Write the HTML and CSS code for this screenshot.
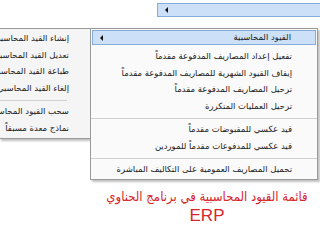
FILE: index.html
```html
<!DOCTYPE html>
<html lang="ar">
<head>
  <meta charset="UTF-8" />
  <meta name="viewport" content="width=device-width, initial-scale=1.0"/>
  <title>قائمة القيود المحاسبية</title>
  <link rel="stylesheet" href="styles.css">
</head>
<body>

  <div class="topbar">
    <span class="arrow"></span>
  </div>

  <div class="menus">
    <ul class="menu menu--back" dir="rtl">
      <li>إنشاء القيد المحاسبي</li>
      <li>تعديل القيد المحاسبي</li>
      <li>طباعة القيد المحاسبي</li>
      <li>إلغاء القيد المحاسبي</li>
      <li class="sep"></li>
      <li>سحب القيود المحاسبية</li>
      <li>نماذج معدة مسبقاً</li>
    </ul>

    <ul class="menu menu--main" dir="rtl">
      <li class="menu__head">القيود المحاسبية<span class="arrow"></span></li>
      <li>تفعيل إعداد المصاريف المدفوعة مقدماً</li>
      <li>إيقاف القيود الشهرية للمصاريف المدفوعة مقدماً</li>
      <li>ترحيل المصاريف المدفوعة مقدماً</li>
      <li>ترحيل العمليات المتكررة</li>
      <li class="sep"></li>
      <li>قيد عكسي للمقبوضات مقدماً</li>
      <li>قيد عكسي للمدفوعات مقدماً للموردين</li>
      <li class="sep"></li>
      <li>تحميل المصاريف العمومية على التكاليف المباشرة</li>
    </ul>
  </div>

  <div class="caption">
    <p class="caption__ar" dir="rtl">قائمة القيود المحاسبية في برنامج الحناوي</p>
    <p class="caption__en">ERP</p>
  </div>

</body>
</html>
```

FILE: styles.css
```css
:root {
  --menu-bg: #f5f5f5;
  --menu-border: #9a9a9a;
  --hover-bg: #cce1f7;
  --hover-border: #86acd8;
  --text: #222;
  --red: #d6262c;
}

html, body {
  overflow: hidden;
}

body {
  margin: 0;
  width: 320px;
  background: #fff;
  font-family: "DejaVu Sans", sans-serif;
  color: var(--text);
}

.topbar {
  margin: 3px 0 0 157px;
  height: 12px;
  background: var(--hover-bg);
  border: 1px solid var(--hover-border);
  border-right: none;
  display: flex;
  align-items: center;
  padding-left: 7px;
}

.arrow {
  width: 0;
  height: 0;
  border-top: 3px solid transparent;
  border-bottom: 3px solid transparent;
  border-right: 3px solid #111;
}

.menus {
  position: relative;
  height: 150px;
  margin-top: 11px;
}

.menu {
  list-style: none;
  margin: 0;
  padding: 1px 0 2px;
  font-size: 8.5px;
  background: var(--menu-bg);
  border: 1px solid var(--menu-border);
  box-shadow: 2px 2px 2px rgba(0, 0, 0, 0.25);
}

.menu li {
  height: 16.5px;
  line-height: 16.5px;
  white-space: nowrap;
}

.menu li.sep {
  height: 1px;
  margin: 3.5px 0 2.5px;
  background: #cfcfcf;
}

.menu--back {
  width: 91px;
  margin-left: -1px;
  overflow: hidden;
}

.menu--back li {
  padding-right: 22px;
}

.menu--back li.sep {
  margin-right: 24px;
  padding: 0;
}

.menu--main {
  position: absolute;
  top: 0;
  left: 90px;
  right: 2px;
  padding-bottom: 1px;
  background: #fafafa;
}

.menu--main li {
  padding-right: 25px;
}

.menu--main li.sep {
  padding: 0;
}

.menu--main .menu__head {
  position: relative;
  height: 13px;
  line-height: 13px;
  margin: 0 1px 3px;
  padding-right: 24px;
  background: var(--hover-bg);
  border: 1px solid var(--hover-border);
}

.menu__head .arrow {
  position: absolute;
  left: 7px;
  top: 4px;
}

.caption {
  margin: 9px 0 0 94px;
  text-align: center;
  color: var(--red);
}

.caption p {
  margin: 0;
  white-space: nowrap;
  line-height: 19px;
}

.caption__ar {
  font-family: "DejaVu Sans", sans-serif;
  font-stretch: condensed;
  font-size: 13px;
}

.caption__en {
  font-family: "Liberation Sans", sans-serif;
  font-size: 17px;
}
```
